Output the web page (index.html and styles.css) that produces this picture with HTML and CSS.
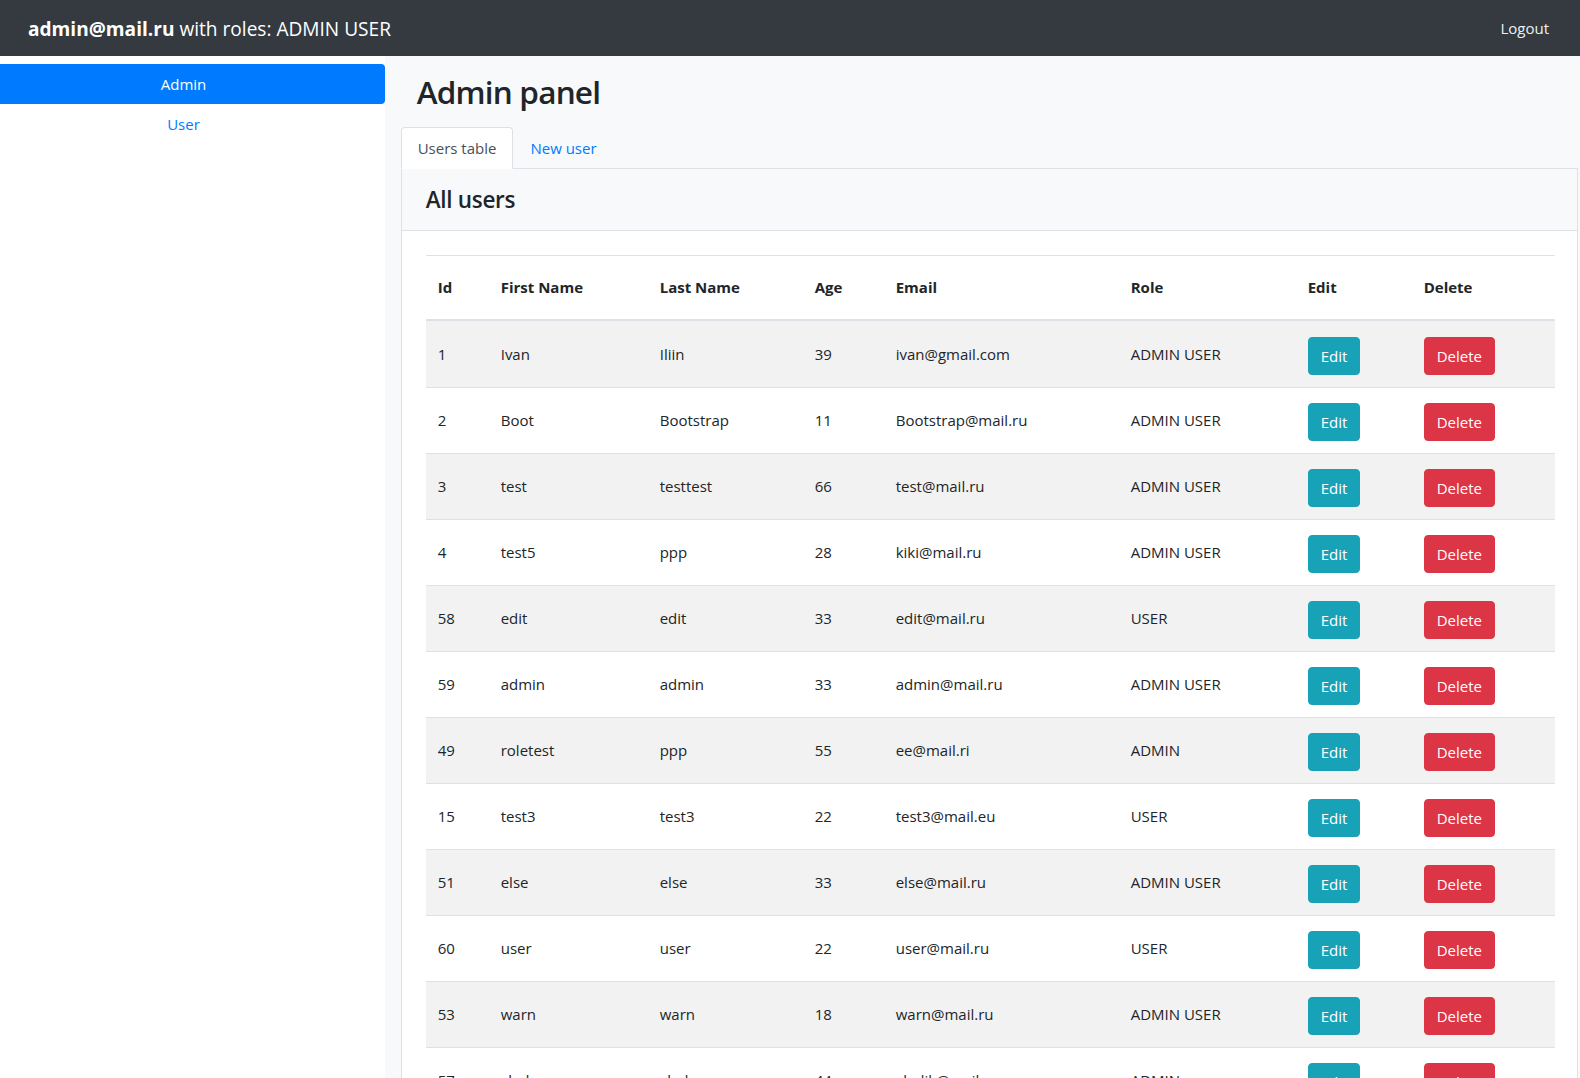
FILE: index.html
```html
<!DOCTYPE html>
<html lang="en">
<head>
<meta charset="utf-8">
<title>Admin panel</title>
<link rel="stylesheet" href="styles.css">
</head>
<body>
<header class="navbar">
  <div class="brand"><b>admin@mail.ru</b> with roles: ADMIN USER</div>
  <a class="logout" href="#">Logout</a>
</header>
<div class="layout">
  <aside class="sidebar">
    <nav class="side-nav">
      <a class="side-link active" href="#">Admin</a>
      <a class="side-link" href="#">User</a>
    </nav>
  </aside>
  <main class="main">
    <h1 class="page-title">Admin panel</h1>
    <ul class="tabs">
      <li><a class="tab active" href="#">Users table</a></li>
      <li><a class="tab" href="#">New user</a></li>
    </ul>
    <section class="card">
      <div class="card-header"><h4 class="card-title">All users</h4></div>
      <div class="card-body">
        <table class="users">
          <thead>
            <tr>
              <th class="c-id">Id</th>
              <th class="c-first">First Name</th>
              <th class="c-last">Last Name</th>
              <th class="c-age">Age</th>
              <th class="c-email">Email</th>
              <th class="c-role">Role</th>
              <th class="c-edit">Edit</th>
              <th class="c-del">Delete</th>
            </tr>
          </thead>
          <tbody>
            <tr><td>1</td><td>Ivan</td><td>Iliin</td><td>39</td><td>ivan@gmail.com</td><td>ADMIN USER</td><td class="act"><button class="btn btn-edit">Edit</button></td><td class="act"><button class="btn btn-del">Delete</button></td></tr>
            <tr><td>2</td><td>Boot</td><td>Bootstrap</td><td>11</td><td>Bootstrap@mail.ru</td><td>ADMIN USER</td><td class="act"><button class="btn btn-edit">Edit</button></td><td class="act"><button class="btn btn-del">Delete</button></td></tr>
            <tr><td>3</td><td>test</td><td>testtest</td><td>66</td><td>test@mail.ru</td><td>ADMIN USER</td><td class="act"><button class="btn btn-edit">Edit</button></td><td class="act"><button class="btn btn-del">Delete</button></td></tr>
            <tr><td>4</td><td>test5</td><td>ppp</td><td>28</td><td>kiki@mail.ru</td><td>ADMIN USER</td><td class="act"><button class="btn btn-edit">Edit</button></td><td class="act"><button class="btn btn-del">Delete</button></td></tr>
            <tr><td>58</td><td>edit</td><td>edit</td><td>33</td><td>edit@mail.ru</td><td>USER</td><td class="act"><button class="btn btn-edit">Edit</button></td><td class="act"><button class="btn btn-del">Delete</button></td></tr>
            <tr><td>59</td><td>admin</td><td>admin</td><td>33</td><td>admin@mail.ru</td><td>ADMIN USER</td><td class="act"><button class="btn btn-edit">Edit</button></td><td class="act"><button class="btn btn-del">Delete</button></td></tr>
            <tr><td>49</td><td>roletest</td><td>ppp</td><td>55</td><td>ee@mail.ri</td><td>ADMIN</td><td class="act"><button class="btn btn-edit">Edit</button></td><td class="act"><button class="btn btn-del">Delete</button></td></tr>
            <tr><td>15</td><td>test3</td><td>test3</td><td>22</td><td>test3@mail.eu</td><td>USER</td><td class="act"><button class="btn btn-edit">Edit</button></td><td class="act"><button class="btn btn-del">Delete</button></td></tr>
            <tr><td>51</td><td>else</td><td>else</td><td>33</td><td>else@mail.ru</td><td>ADMIN USER</td><td class="act"><button class="btn btn-edit">Edit</button></td><td class="act"><button class="btn btn-del">Delete</button></td></tr>
            <tr><td>60</td><td>user</td><td>user</td><td>22</td><td>user@mail.ru</td><td>USER</td><td class="act"><button class="btn btn-edit">Edit</button></td><td class="act"><button class="btn btn-del">Delete</button></td></tr>
            <tr><td>53</td><td>warn</td><td>warn</td><td>18</td><td>warn@mail.ru</td><td>ADMIN USER</td><td class="act"><button class="btn btn-edit">Edit</button></td><td class="act"><button class="btn btn-del">Delete</button></td></tr>
            <tr><td>57</td><td>vlad</td><td>vlad</td><td>44</td><td>vladik@mail.ru</td><td>ADMIN</td><td class="act"><button class="btn btn-edit">Edit</button></td><td class="act"><button class="btn btn-del">Delete</button></td></tr>
          </tbody>
        </table>
      </div>
    </section>
  </main>
</div>
</body>
</html>
```
FILE: styles.css
```css
* { box-sizing: border-box; }

html, body {
  margin: 0;
  padding: 0;
}

body {
  font-family: "Open Sans", "Noto Sans", sans-serif;
  font-size: 15px;
  line-height: 24px;
  color: #212529;
  background: #f8f9fa;
}

a { text-decoration: none; }

/* Top bar */
.navbar {
  height: 56px;
  background: #343a40;
  display: flex;
  align-items: center;
  justify-content: space-between;
  padding: 2px 31px 0 28px;
}

.brand {
  color: #fff;
  font-size: 19.1px;
  line-height: 30px;
  white-space: nowrap;
}

.brand b { font-weight: 700; }

.logout {
  color: #eef0f2;
  font-size: 15px;
  line-height: 24px;
  margin-top: -2px;
}

/* Layout */
.layout {
  display: flex;
  align-items: stretch;
}

.sidebar {
  width: 385px;
  flex: 0 0 385px;
  background: #fff;
  padding-top: 8px;
  min-height: calc(100vh - 56px);
}

.side-nav {
  display: flex;
  flex-direction: column;
}

.side-link {
  display: block;
  padding: 8px 18px 8px 0;
  text-align: center;
  color: #007bff;
  border-radius: 0 4px 4px 0;
}

.side-link.active {
  background: #007bff;
  color: #fff;
}

.main {
  flex: 1 1 auto;
  min-width: 0;
  padding: 17px 2px 0 15.7px;
}

.page-title {
  margin: 0 0 15.5px 16px;
  font-size: 31.5px;
  line-height: 38.4px;
  font-weight: 600;
  letter-spacing: -0.8px;
}

/* Tabs */
.tabs {
  list-style: none;
  margin: 0;
  padding: 0;
  display: flex;
  border-bottom: 1px solid #dee2e6;
}

.tabs li { margin-bottom: -1px; }

.tab {
  display: block;
  padding: 8px 16px;
  border: 1px solid transparent;
  border-radius: 4px 4px 0 0;
  color: #007bff;
}

.tab.active {
  color: #495057;
  background: #fff;
  border-color: #dee2e6 #dee2e6 #fff;
}

/* Card */
.card {
  background: #fff;
  border: 1px solid #dee2e6;
  border-top: 0;
}

.card-header {
  background: #f8f9fa;
  border-bottom: 1px solid #dee2e6;
  padding: 17px 24px 16px;
}

.card-title {
  margin: 0;
  font-size: 22.5px;
  line-height: 27.6px;
  font-weight: 600;
  letter-spacing: -0.3px;
}

.card-body {
  padding: 24px;
}

/* Table */
.users {
  width: 100%;
  border-collapse: separate;
  border-spacing: 0;
  table-layout: fixed;
}

.users th,
.users td {
  text-align: left;
  vertical-align: middle;
  padding: 12px;
  white-space: nowrap;
}

.users th {
  font-weight: 700;
  padding-top: 19.5px;
  padding-bottom: 19.5px;
  border-top: 1px solid #dee2e6;
  border-bottom: 2px solid #dee2e6;
}

.users td {
  border-top: 1px solid #dee2e6;
}

.users td.act {
  padding-top: 15px;
  padding-bottom: 12px;
}

.users tbody tr:first-child td { border-top: 0; }
.users tbody tr:first-child td.act { padding-top: 16px; }

.users tbody tr:nth-child(odd) td { background: #f2f2f2; }

.c-id { width: 63px; }
.c-first { width: 159px; }
.c-last { width: 155px; }
.c-age { width: 81px; }
.c-email { width: 235px; }
.c-role { width: 177px; }
.c-edit { width: 116px; }
.c-del { width: 143px; }

/* Buttons */
.btn {
  display: block;
  height: 38px;
  padding: 6px 12px;
  border: 1px solid transparent;
  border-radius: 4px;
  font-family: inherit;
  font-size: 15px;
  line-height: 24px;
  color: #fff;
  cursor: pointer;
}

.btn-edit {
  background: #17a2b8;
  border-color: #17a2b8;
}

.btn-del {
  background: #dc3545;
  border-color: #dc3545;
}
```
